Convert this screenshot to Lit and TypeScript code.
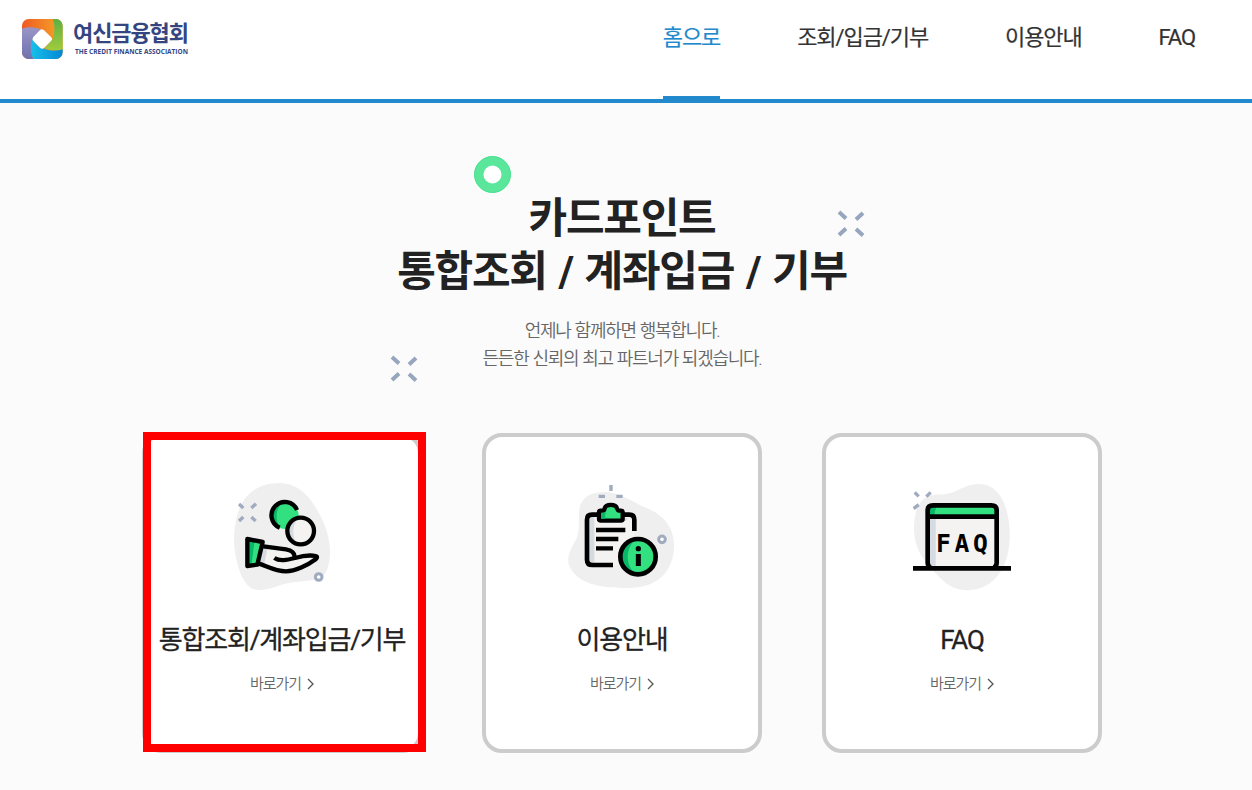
import { LitElement, html, css, svg } from 'lit';
import { customElement, property } from 'lit/decorators.js';

const handIcon = svg`
    <path fill="#efefef" d="M190 39C240 38 278 68 305 118C330 158 346 205 345 250C344 285 335 312 318 324C285 336 235 332 195 346C165 358 125 368 105 352C82 335 66 290 59 240C53 190 62 125 88 88C112 55 150 40 190 39Z"/>
    <g stroke="#a0abc0" stroke-width="10">
        <path d="M72 102L85 114M123 101L109 114M72 153L85 141M122 153L109 141"/>
    </g>
    <circle cx="311" cy="321" r="10" fill="#fff" stroke="#a0abc0" stroke-width="9"/>
    <circle cx="211" cy="137" r="40" fill="#33e080"/>
    <path fill="#08b768" d="M205 96C178 100 168 122 171 140C173 158 184 172 196 177C178 145 182 115 205 96Z"/>
    <path fill="none" stroke="#000" stroke-width="13" d="M246 120A40 40 0 1 0 194 173"/>
    <circle cx="257" cy="183" r="40" fill="#f4f3f1"/>
    <path fill="#d5dbe1" d="M252 143A40 40 0 0 0 246 221C231 200 230 163 252 143Z"/>
    <circle cx="257" cy="183" r="40" fill="none" stroke="#000" stroke-width="13"/>
    <path fill="#f4f3f1" d="M145 230L220 240Q242 245 239 260L300 261C270 291 230 308 200 303L135 282Z"/>
    <path fill="#d5dbe1" d="M144 231L158 233L147 285L134 281Z"/>
    <path fill="none" stroke="#000" stroke-width="13" stroke-linejoin="round" d="M145 229L213 238Q238 242 239 260M178 264C195 275 216 270 240 264C260 258 282 254 302 258Q310 260 302 268C278 286 240 304 213 304C180 304 153 287 132 281"/>
    <path fill="#33e080" d="M97 208L143 215L127 284L97 288Z"/>
    <path fill="#08b768" d="M99 208L119 211L109 287L99 288Z"/>
    <path fill="none" stroke="#000" stroke-width="13" stroke-linejoin="round" d="M97 207L143 216L127 284L97 288Z"/>`;

const guideIcon = svg`
    <path fill="#efefef" d="M72 130C72 88 100 67 145 66C192 65 225 91 258 107C310 126 356 157 357 225C358 295 315 350 235 353C150 357 70 347 43 288C32 259 51 232 64 207C73 188 72 160 72 130Z"/>
    <path fill="none" stroke="#a0abc0" stroke-width="10" d="M168 45V63M131 79H150M184 79H203"/>
    <circle cx="321" cy="208" r="10" fill="#fff" stroke="#a0abc0" stroke-width="9"/>
    <path fill="#f4f3f1" d="M96 147Q96 134 110 134H226Q238 134 238 147V205L190 285H108Q96 283 96 270Z"/>
    <path fill="#d5dbe1" d="M104 140H118V280H108Q101 278 101 270ZM207 144L219 145L211 154H203Z"/>
    <path fill="none" stroke="#000" stroke-width="14" d="M128 134H111Q96 134 96 149V269Q96 285 112 285H174M206 134H223Q238 134 238 149V183"/>
    <path fill="none" stroke="#000" stroke-width="13" d="M123 180H211M123 207H190M123 235H174"/>
    <path fill="#33e080" stroke="#000" stroke-width="13" stroke-linejoin="round" d="M132 126Q132 121 138 122H144Q148 121 149 115C153 101 182 101 186 115Q188 121 192 122H198Q203 122 203 127V147Q203 152 197 152H138Q132 152 132 147Z"/>
    <path fill="#08b768" d="M138 129L153 127Q148 137 151 146H138Z"/>
    <circle cx="249" cy="260" r="53" fill="#33e080"/>
    <path fill="#08b768" d="M246 207A53 53 0 0 0 246 313C209 293 209 228 246 207Z"/>
    <circle cx="249" cy="260" r="53" fill="none" stroke="#000" stroke-width="14"/>
    <circle cx="250" cy="236" r="8"/>
    <path stroke="#000" stroke-width="15" d="M250 252V288"/>`;

const faqIcon = svg`
    <path fill="#efefef" d="M90 84C105 72 125 76 153 72C190 66 205 44 250 42C300 41 326 82 337 130C350 190 347 255 318 303C292 345 250 364 210 360C160 358 130 320 92 275C60 238 50 185 62 130Q69 99 90 84Z"/>
    <path stroke="#a0abc0" stroke-width="10" d="M59 67L71 79M107 67L94 80M56 116L71 104"/>
    <path fill="#f4f3f1" d="M98 140H305V290H98Z"/>
    <path fill="#d5dbe1" d="M104 146H122V290H104Z"/>
    <path fill="#33e080" d="M98 118Q98 107 112 107H291Q305 107 305 118V139H98Z"/>
    <path fill="#08b768" d="M103 118Q103 111 112 111H125Q119 120 119 134H103Z"/>
    <path fill="none" stroke="#000" stroke-width="14" d="M108 292Q98 290 98 278V121Q98 106 114 106H289Q305 106 305 121V278Q305 290 295 292M98 140H305"/>
    <path stroke="#000" stroke-width="14" d="M54 295H348"/>
    <text class="faq-word" x="123" y="247">FAQ</text>`;

const icons: Record<string, unknown> = {
    hand: handIcon,
    guide: guideIcon,
    faq: faqIcon,
};

@customElement('menu-card')
export class MenuCard extends LitElement {

    @property() label = '';
    @property() icon = 'hand';

    static styles = css`
    :host {
        display: block;
        box-sizing: border-box;
        width: 280px;
        height: 320px;
        padding-top: 33px;
        border: 4px solid #ccc;
        border-radius: 20px;
        background: #fff;
        text-align: center;
    }

    .icon {
        display: block;
        width: 130px;
        height: 130px;
        margin: 0 auto;
    }

    .faq-word {
        font: bold 74px 'DejaVu Sans Mono', monospace;
        letter-spacing: 11px;
    }

    .label {
        margin: 21px -10px 0;
        font-size: 26px;
        font-weight: 400;
        line-height: 38px;
        letter-spacing: -0.046em;
        color: #222;
        white-space: nowrap;
        -webkit-text-stroke: 0.3px #222;
    }

    .go {
        display: flex;
        justify-content: center;
        align-items: center;
        gap: 6px;
        margin-top: 14px;
        font-size: 15px;
        font-weight: 350;
        line-height: 22px;
        letter-spacing: -0.07em;
        color: #666;
    }

    .arrow {
        width: 7px;
        height: 12px;
        fill: none;
        stroke: #555;
        stroke-width: 1.3px;
    }
    `;

    render() {
        return html`
        <svg class="icon" viewBox="6 0 390 390">${icons[this.icon]}</svg>
        <div class="label">${this.label}</div>
        <div class="go">
            <span>바로가기</span>
            <svg class="arrow" viewBox="0 0 7 12"><path d="M1 1L6 6L1 11"/></svg>
        </div>
        `;
    }
}

@customElement('app-root')
export class AppRoot extends LitElement {

    @property({ type: Number }) active = 0;

    menu = ['홈으로', '조회/입금/기부', '이용안내', 'FAQ'];

    static styles = css`
    :host {
        display: block;
        box-sizing: border-box;
        width: 100%;
        height: 790px;
        overflow: hidden;
        background: #fbfbfb;
        font-family: Roboto, 'Noto Sans CJK KR', sans-serif;
    }

    header {
        display: flex;
        justify-content: space-between;
        box-sizing: border-box;
        height: 103px;
        padding: 0 56px 0 22px;
        border-bottom: 4px solid #2189cc;
        background: #fff;
    }

    .logo {
        display: flex;
        gap: 10px;
        height: 40px;
        margin-top: 19px;
    }

    .mark {
        width: 41px;
        height: 40px;
    }

    .name {
        padding-top: 2px;
        font-size: 22px;
        font-weight: 700;
        line-height: 26px;
        letter-spacing: -1.1px;
        color: #34457f;
        white-space: nowrap;
    }

    .name-en {
        display: block;
        width: 118px;
        height: 12px;
        overflow: visible;
    }

    .name-en text {
        font: 700 7.5px 'Open Sans', sans-serif;
        fill: #34457f;
    }

    nav {
        display: flex;
        gap: 77px;
        margin-right: 1px;
    }

    .item {
        box-sizing: border-box;
        height: 103px;
        padding-top: 22px;
        font-size: 22px;
        font-weight: 400;
        line-height: 32px;
        letter-spacing: -0.05em;
        color: #333;
        white-space: nowrap;
        -webkit-text-stroke: 0.2px;
    }

    .item.on {
        border-bottom: 7px solid #2189cc;
        color: #2189cc;
    }

    .hero {
        position: relative;
        padding-top: 89px;
        text-align: center;
    }

    h1 {
        margin: 0 8px 0 0;
        font-size: 42px;
        font-weight: 700;
        line-height: 53px;
        letter-spacing: -0.03em;
        word-spacing: 2.6px;
        color: #222;
    }

    .lead {
        margin: 19px 8px 0 0;
        font-size: 18px;
        font-weight: 350;
        line-height: 28px;
        letter-spacing: -0.07em;
        word-spacing: 0.8px;
        color: #666;
    }

    .ring {
        position: absolute;
        left: 474px;
        top: 53px;
        width: 37px;
        height: 37px;
    }

    .spark {
        position: absolute;
        width: 28px;
        height: 28px;
        stroke: #98a6bd;
        stroke-width: 4px;
    }

    .spark.right {
        left: 837px;
        top: 107px;
    }

    .spark.left {
        left: 390px;
        top: 252px;
    }

    .cards {
        display: flex;
        gap: 60px;
        margin: 60px 0 0 142px;
    }

    .slot {
        position: relative;
    }

    .highlight {
        position: absolute;
        box-sizing: border-box;
        left: 1px;
        top: -1px;
        width: 283px;
        height: 320px;
        border: 8px solid #f00;
    }
    `;

    renderSpark(side: string) {
        return html`
        <svg class="spark ${side}" viewBox="0 0 28 28">
            <path d="M2 2L9 8.5M26 3L19 9.5M2 25L9 18.500M26 25.500L19 19"/>
        </svg>
        `;
    }

    render() {
        return html`
        <header>
            <div class="logo">
                <svg class="mark" viewBox="0 0 123 120">
                    <defs>
                        <clipPath id="round"><rect width="122" height="120" rx="20"/></clipPath>
                        <linearGradient id="orange"><stop stop-color="#ee5a24"/><stop offset="1" stop-color="#f7a927"/></linearGradient>
                        <linearGradient id="green" x2="0" y2="1"><stop stop-color="#5cb046"/><stop offset="1" stop-color="#a2cb3c"/></linearGradient>
                        <linearGradient id="blue"><stop stop-color="#16c0ea"/><stop offset="1" stop-color="#0487d4"/></linearGradient>
                        <linearGradient id="purple" x2="0" y2="1"><stop stop-color="#9a95c6"/><stop offset="1" stop-color="#6d72b0"/></linearGradient>
                    </defs>
                    <g clip-path="url(#round)">
                        <rect width="123" height="120" fill="url(#orange)"/>
                        <path fill="url(#green)" d="M92 0H123V92C108 98 87 95 67 88L92 60C99 40 99 18 92 0Z"/>
                        <path fill="url(#purple)" d="M0 29C20 22 42 24 59 33L32 60C24 80 26 103 34 120H0Z"/>
                        <path fill="url(#blue)" d="M32 60C43 80 57 88 76 92Q101 98 123 91V120H34C25 100 24 78 32 60Z"/>
                        <path fill="#fff" d="M55 32Q60 29 66 34L87 54Q93 60 87 66L66 87Q60 92 54 86L33 65Q29 60 34 54Z"/>
                    </g>
                </svg>
                <div>
                    <div class="name">여신금융협회</div>
                    <svg class="name-en"><text x="2" y="7" textLength="113" lengthAdjust="spacingAndGlyphs">THE CREDIT FINANCE ASSOCIATION</text></svg>
                </div>
            </div>
            <nav>
                ${this.menu.map((m, i) => html`<div class="item ${i === this.active ? 'on' : ''}">${m}</div>`)}
            </nav>
        </header>
        <section class="hero">
            <svg class="ring" viewBox="0 0 37 37">
                <circle cx="18.500" cy="18.500" r="13.500" fill="#fff" stroke="#5ae79b" stroke-width="9"/>
                <circle cx="18.500" cy="18.500" r="18" fill="none" stroke="#43df8b"/>
            </svg>
            ${this.renderSpark('right')}
            ${this.renderSpark('left')}
            <h1>카드포인트<br>통합조회 / 계좌입금 / 기부</h1>
            <p class="lead">언제나 함께하면 행복합니다.<br>든든한 신뢰의 최고 파트너가 되겠습니다.</p>
        </section>
        <section class="cards">
            <div class="slot">
                <menu-card icon="hand" label="통합조회/계좌입금/기부"></menu-card>
                <div class="highlight"></div>
            </div>
            <menu-card icon="guide" label="이용안내"></menu-card>
            <menu-card icon="faq" label="FAQ"></menu-card>
        </section>
        `;
    }
}
